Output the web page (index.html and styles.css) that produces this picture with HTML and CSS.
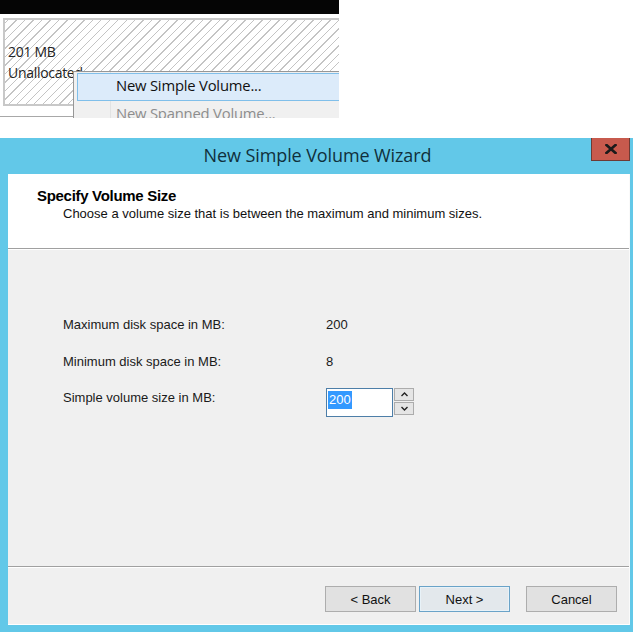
FILE: index.html
```html
<!DOCTYPE html>
<html>
<head>
<meta charset="utf-8">
<link rel="stylesheet" href="styles.css">
</head>
<body>
<div class="shot">
  <div class="blackbar"></div>
  <div class="disk">
    <div class="hatch">
      <div class="disk-text">201 MB<br>Unallocated</div>
    </div>
    <div class="menu">
      <div class="menu-item hl">New Simple Volume...</div>
      <div class="menu-item dis">New Spanned Volume...</div>
    </div>
  </div>
</div>

<div class="window">
  <div class="titlebar">
    <span class="title">New Simple Volume Wizard</span>
    <div class="close">
      <svg width="12" height="10" viewBox="0 0 12 10"><path d="M1.5 1 L10.5 9 M10.5 1 L1.5 9" stroke="#1a1a1a" stroke-width="2.6" stroke-linecap="square"/></svg>
    </div>
  </div>
  <div class="client">
    <div class="header">
      <div class="h-title">Specify Volume Size</div>
      <div class="h-sub">Choose a volume size that is between the maximum and minimum sizes.</div>
    </div>
    <div class="body">
      <div class="form">
        <div class="lbl">Maximum disk space in MB:</div><div class="val">200</div>
        <div class="lbl">Minimum disk space in MB:</div><div class="val">8</div>
        <div class="lbl">Simple volume size in MB:</div>
        <div class="spin">
          <div class="input"><span class="sel">200</span></div>
          <div class="arrows">
            <div class="arr"><svg width="7" height="5" viewBox="0 0 7 5"><path d="M0.5 4 L3.5 1 L6.5 4" fill="none" stroke="#222" stroke-width="1.4"/></svg></div>
            <div class="arr"><svg width="7" height="5" viewBox="0 0 7 5"><path d="M0.5 1 L3.5 4 L6.5 1" fill="none" stroke="#222" stroke-width="1.4"/></svg></div>
          </div>
        </div>
      </div>
    </div>
    <div class="footer">
      <button class="btn">&lt; Back</button>
      <button class="btn def">Next &gt;</button>
      <button class="btn cancel">Cancel</button>
    </div>
  </div>
</div>
</body>
</html>
```
FILE: styles.css
```css
html, body {
  margin: 0;
  padding: 0;
  background: #ffffff;
}
body {
  width: 633px;
  height: 632px;
  overflow: hidden;
  font-family: "Liberation Sans", Arial, sans-serif;
}

/* top snippet */
.shot {
  width: 339px;
  height: 118px;
  overflow: hidden;
}
.blackbar {
  height: 14px;
  background: #050505;
}
.disk {
  position: relative;
  height: 104px;
  background: #ffffff;
}
.hatch {
  margin: 4px 0 0 3px;
  height: 84px;
  border: 2px solid #c8c8c8;
  border-right: none;
  background-color: #ffffff;
  background-image: repeating-linear-gradient(-45deg, #ffffff 0px, #ffffff 5px, #c4c4c4 5px, #c4c4c4 6px);
}
.disk-text {
  padding: 21px 0 0 3px;
  font-family: "Open Sans", "Noto Sans", sans-serif;
  font-size: 14px;
  line-height: 21px;
  color: #222;
  letter-spacing: -0.3px;
}
.disk::after {
  content: "";
  display: block;
  margin-top: 10px;
  height: 1px;
  background: #a8a8a8;
}
.menu {
  position: absolute;
  left: 73px;
  top: 53px;
  width: 270px;
  background: #f0f0f0;
  border: 1px solid #979797;
  padding: 1px 0 0 3px;
  background-image: linear-gradient(#e2e3e3, #e2e3e3);
  background-size: 1px 100%;
  background-position: 36px 0;
  background-repeat: no-repeat;
}
.menu-item {
  height: 26px;
  line-height: 22px;
  padding-left: 38px;
  font-family: "Open Sans", "Noto Sans", sans-serif;
  font-size: 14.8px;
  color: #111;
  letter-spacing: -0.2px;
  border: 1px solid transparent;
}
.menu-item.hl {
  background: #dcebfa;
  border-color: #80bfea;
}
.menu-item.dis {
  color: #8d8d8d;
  line-height: 22px;
}

/* wizard window */
.window {
  margin-top: 20px;
  height: 494px;
  background: #62c8e8;
  display: flex;
  flex-direction: column;
}
.titlebar {
  position: relative;
  height: 36px;
  flex: none;
  display: flex;
  align-items: center;
  justify-content: center;
}
.title {
  font-family: "Open Sans", "Noto Sans", sans-serif;
  font-size: 18px;
  color: #10303c;
  padding-left: 2px;
  margin-top: -3px;
  letter-spacing: -0.1px;
}
.close {
  position: absolute;
  right: 3px;
  top: 0;
  width: 39px;
  height: 23px;
  box-sizing: border-box;
  background: #c75a4d;
  border: 1px solid #6e3a34;
  border-top: none;
  display: flex;
  align-items: center;
  justify-content: center;
}
.client {
  flex: 1;
  margin: 0 3px 7px 8px;
  display: flex;
  flex-direction: column;
  background: #f0f0f0;
  border-right: 1px solid #fafafa;
}
.header {
  height: 75px;
  flex: none;
  background: #ffffff;
  border-bottom: 1px solid #a0a0a0;
  box-sizing: border-box;
  padding: 13px 0 0 29px;
}
.h-title {
  font-weight: bold;
  font-size: 15px;
  color: #000;
  line-height: 17px;
  letter-spacing: -0.3px;
}
.h-sub {
  padding-left: 26px;
  padding-top: 1px;
  font-size: 13px;
  line-height: 17px;
  color: #111;
}
.body {
  flex: 1;
  border-top: 1px solid #ffffff;
  border-bottom: 1px solid #a0a0a0;
  padding: 57px 0 0 55px;
}
.form {
  display: grid;
  grid-template-columns: 263px auto;
  grid-auto-rows: 36.5px;
  align-items: center;
  font-size: 13px;
  color: #1a1a1a;
}
.form .lbl, .form .val {
  line-height: 16px;
}
.spin {
  display: flex;
  align-items: flex-start;
  margin-top: 8px;
}
.input {
  width: 67px;
  height: 29px;
  box-sizing: border-box;
  border: 1px solid #4d7ea8;
  background: #fff;
  padding: 2px 0 0 1px;
  font-size: 13px;
}
.sel {
  display: inline-block;
  background: #3399ff;
  color: #fff;
  height: 18px;
  line-height: 18px;
  padding: 0 1px;
}
.arrows {
  margin-left: 1px;
  display: flex;
  flex-direction: column;
  gap: 1px;
}
.arr {
  width: 20px;
  height: 13px;
  box-sizing: border-box;
  border: 1px solid #acacac;
  background: #e5e5e5;
  display: flex;
  align-items: center;
  justify-content: center;
}
.footer {
  height: 58px;
  flex: none;
  border-top: 1px solid #ffffff;
  display: flex;
  align-items: flex-start;
  padding: 18px 0 0 317px;
  box-sizing: border-box;
  border-bottom: 1px solid #ffffff;
}
.btn {
  width: 91px;
  height: 26px;
  margin: 0;
  padding: 0;
  box-sizing: border-box;
  border: 1px solid #adadad;
  background: #e1e1e1;
  font-family: "Liberation Sans", Arial, sans-serif;
  font-size: 13px;
  color: #111;
  margin-right: 3px;
}
.btn.def {
  border-color: #6aa3c8;
  background: #e3e8ec;
  box-shadow: inset 0 0 0 1px #e8f2f8;
}
.btn.cancel {
  margin-left: 13px;
}
```
